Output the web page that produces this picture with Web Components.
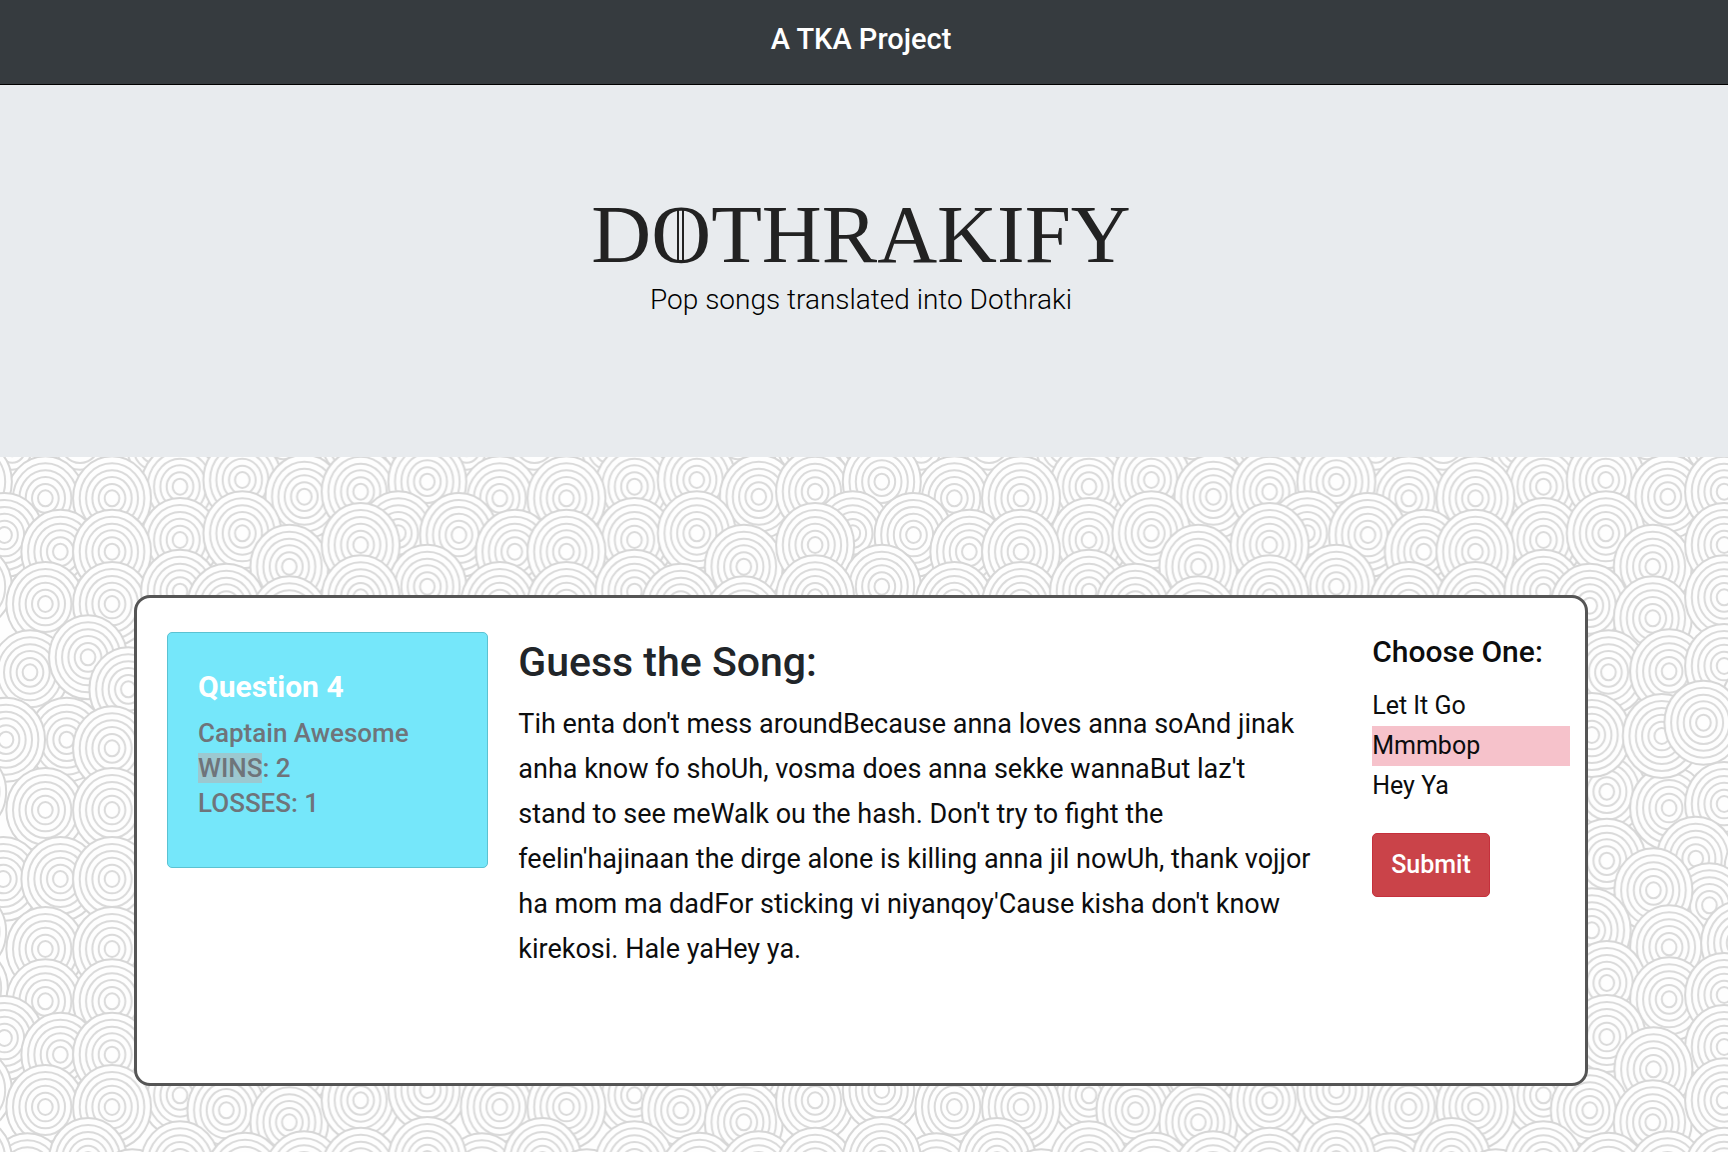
<!DOCTYPE html>
<html lang="en">
<head>
<meta charset="utf-8">
<title>Dothrakify</title>
<style>
  html, body { margin: 0; min-height: 100%; }
  body { font-family: Roboto, "Liberation Sans", sans-serif; color: #0c0d0e; background: #fff; }
</style>
</head>
<body>
<dothrakify-app></dothrakify-app>

<script>
const define = (name, html) => customElements.define(name, class extends HTMLElement {
  constructor() {
    super();
    this.attachShadow({ mode: 'open' }).innerHTML = html;
  }
});

define('site-bar', `
<style>
  :host { display: block; background: #363b3f; color: #fff; border-bottom: 1px solid #000; }
  a { display: block; padding: 19px 6px 25px 0; text-align: center; color: inherit; text-decoration: none;
      font-size: 29px; line-height: 40px; font-weight: 500; }
</style>
<a href="#"><slot></slot></a>`);

define('site-hero', `
<style>
  :host { display: block; background: #e8ebee; padding: 104px 6px 137px 0; text-align: center; }
  h1 { margin: 0; font: 400 83px/90px "Liberation Serif", serif; color: #222; }
  .o { position: relative; }
  .o::after { content: ""; position: absolute; left: 26px; top: 22px; width: 3px; height: 52px;
              border: solid #222; border-width: 0 2px; }
  p { margin: 0; font-size: 28px; line-height: 41px; font-weight: 300; color: #000; }
</style>
<h1>D<span class="o">O</span>THRAKIFY</h1>
<p><slot></slot></p>`);

/* Overlapping ring motif: [x, y] centres in pattern units, painted back to front. */
const RINGS = [
  [60,-30],[240,-40],[460,-20],[640,-35],[850,-30],[1080,-50],[1240,-45],[1400,-20],
  [540,95],[727,75],[136,130],[336,130],[913,125],[1082,110],[1282,80],
  [1195,235],[1377,240],[181,290],[540,255],[336,290],[727,235],[868,335],[1082,270],[1282,395],
  [136,447],[336,447],[540,410],[679,452],[868,490],[1082,427],
  [90,652],[264,607],[385,703],[735,652],[917,649],[1082,633],[1188,749],
  [200,854],[18,854],[336,880],[730,1010],[685,840],[917,1059],[895,843],[1082,1047],[1020,803],
  [1265,1010],[136,1065],[336,1065],[10,1272],[181,1272],[336,1272],
  [730,1217],[997,1211],[1200,1243],[1038,1351],[870,1306],[1265,1430],
  [136,1482],[336,1482],[685,1426],[917,1477],[1130,1464],[730,1584],[1270,1600],
  [136,1639],[336,1639],[917,1633],[1082,1620],[1377,1749],[181,1799],[336,1799],
  [730,1746],[1082,1776],[870,1843],
  [540,1921],[679,1966],[868,2002],[1082,1936],[1282,1905],
  [136,1956],[336,1956],
  [82,2161],[264,2115],[397,2209],[540,2125],[735,2159],[912,2155],[1082,2144],[1282,2112]
];
const TILE = 1363.5;
define('ring-backdrop', `
<style>
  :host { display: grid; position: relative; background: #fefefe; }
  svg { position: absolute; inset: 0; width: 100%; height: 100%; }
  .content { position: relative; }
</style>
<svg aria-hidden="true">
  <defs>
    <g id="r" fill="none" stroke="#dadada" stroke-width="6">
      <ellipse rx="117" ry="126" fill="#fefefe" stroke="#d6d6d6"/>
      <ellipse rx="97" ry="105"/><ellipse rx="78" ry="84"/><ellipse rx="59" ry="64"/>
      <ellipse rx="40" ry="43"/><ellipse rx="22" ry="24"/>
    </g>
    <pattern id="p" width="${TILE}" height="2250" patternUnits="userSpaceOnUse" patternTransform="translate(0 -2) scale(.33333)">
      ${RINGS.map(([x, y]) => [-TILE, 0, TILE].map(d => x + d)
        .filter(v => v > -130 && v < TILE + 130)
        .map(v => `<use href="#r" x="${v}" y="${y}"/>`).join('')).join('')}
    </pattern>
  </defs>
  <rect width="100%" height="100%" fill="url(#p)"/>
</svg>
<div class="content"><slot></slot></div>`);

define('game-panel', `
<style>
  :host { display: flex; align-items: flex-start; box-sizing: border-box; min-height: 491px;
          border: 3px solid #555; border-radius: 16px; background: #fff; padding: 34px 15px 30px 30px; }
  ::slotted(score-card) { flex: 0 0 22.9%; }
  ::slotted(song-lyrics) { flex: 1; margin: 0 57px 0 30px; }
  ::slotted(song-choices) { flex: 0 0 14.1%; }
</style>
<slot></slot>`);

define('score-card', `
<style>
  :host { display: block; box-sizing: border-box; min-height: 236px; padding: 34px 30px;
          background: #75e7fa; border: 1px solid #5bc2d2; border-radius: 5px; }
  h2 { margin: 0 0 9px; font-size: 30px; line-height: 40px; font-weight: 700; color: #fff; }
  p { margin: 0; font-size: 26px; line-height: 35px; font-weight: 500; color: #6f747a; }
  mark { background: #9cc8d0; color: inherit; }
</style>
<h2>Question 4</h2>
<p>Captain Awesome</p>
<p><mark>WINS</mark>: 2</p>
<p>LOSSES: 1</p>`);

define('song-lyrics', `
<style>
  :host { display: block; }
  h2 { margin: 0 0 10px; font-size: 41px; line-height: 60px; font-weight: 500; color: #212529; }
  p { margin: 0; font-size: 27px; line-height: 45px; }
</style>
<h2>Guess the Song:</h2>
<p><slot></slot></p>`);

define('song-choices', `
<style>
  :host { display: block; }
  fieldset { margin: 0 0 27px; padding: 0; border: 0; min-width: 0; }
  legend { padding: 0; margin-bottom: 14px; font-size: 30px; line-height: 40px; font-weight: 500; }
  label { display: block; font-size: 25px; line-height: 40px; }
  label:has(:checked) { background: #f6c2cb; }
  input { appearance: none; position: absolute; margin: 0; width: 0; height: 0; }
  button { display: block; padding: 11px 18px; border: 1px solid #c5303c; border-radius: 5px; background: #ca4349;
           color: #fff; font: 500 25px/40px Roboto, "Liberation Sans", sans-serif; }
</style>
<form>
<fieldset>
  <legend>Choose One:</legend>
  <label><input type="radio" name="song">Let It Go</label>
  <label><input type="radio" name="song" checked>Mmmbop</label>
  <label><input type="radio" name="song">Hey Ya</label>
</fieldset>
<button type="button">Submit</button>
</form>`);

define('dothrakify-app', `
<style>
  :host { display: flex; flex-direction: column; min-height: 100vh; }
  ring-backdrop { flex: 1; }
  main { padding: 138px 140px 66px 134px; }
</style>
<site-bar>A TKA Project</site-bar>
<site-hero>Pop songs translated into Dothraki</site-hero>
<ring-backdrop>
  <main>
    <game-panel>
      <score-card></score-card>
      <song-lyrics>Tih enta don't mess aroundBecause anna loves anna soAnd jinak anha know fo shoUh, vosma does anna sekke wannaBut laz't stand to see meWalk ou the hash. Don't try to fight the feelin'hajinaan the dirge alone is killing anna jil nowUh, thank vojjor ha mom ma dadFor sticking vi niyanqoy'Cause kisha don't know kirekosi. Hale yaHey ya.</song-lyrics>
      <song-choices></song-choices>
    </game-panel>
  </main>
</ring-backdrop>`);
</script>
</body>
</html>
